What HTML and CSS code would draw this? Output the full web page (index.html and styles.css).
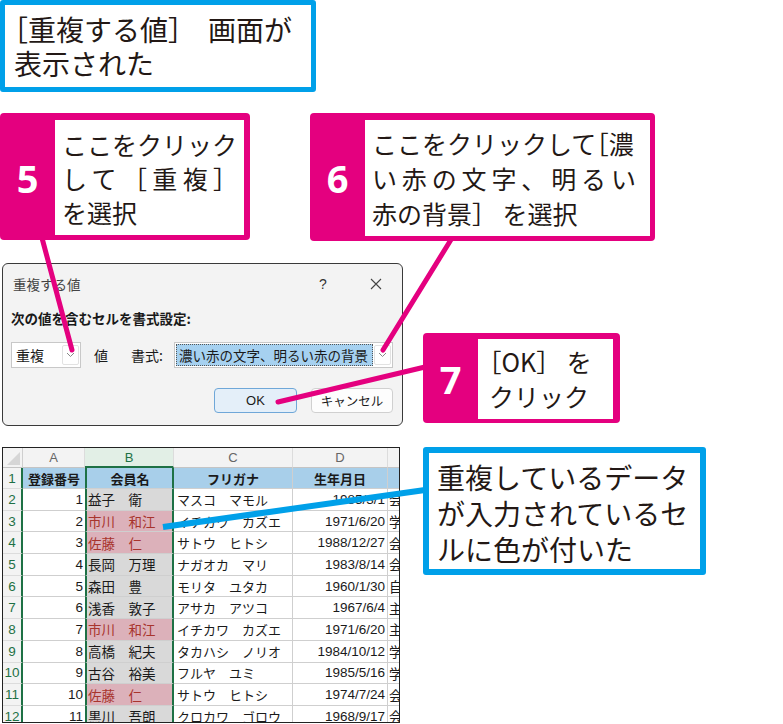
FILE: index.html
```html
<!DOCTYPE html>
<html lang="ja">
<head>
<meta charset="utf-8">
<link rel="stylesheet" href="styles.css">
</head>
<body>
<div class="stage">
  <div class="note note-top">
    <div><span class="half">［</span>重複する値<span class="gap">］</span>画面が</div>
    <div>表示された</div>
  </div>

  <div class="dialog">
    <div class="dlg-title">
      <span class="dlg-name">重複する値</span>
      <span class="tb q">?</span>
      <span class="tb x"><svg width="12" height="12" viewBox="0 0 12 12"><path d="M1 1 L11 11 M11 1 L1 11" stroke="#444" stroke-width="1.1" fill="none"/></svg></span>
    </div>
    <div class="dlg-label">次の値を含むセルを書式設定:</div>
    <div class="dlg-controls">
      <div class="select s1"><span class="sel-text">重複</span><span class="arrow"><svg width="9" height="6" viewBox="0 0 9 6"><path d="M1 1 L4.5 4.5 L8 1" stroke="#888" stroke-width="1" fill="none"/></svg></span></div>
      <span class="lbl v">値</span>
      <span class="lbl f">書式:</span>
      <div class="select s2"><span class="hl">濃い赤の文字、明るい赤の背景</span><span class="arrow"><svg width="9" height="6" viewBox="0 0 9 6"><path d="M1 1 L4.5 4.5 L8 1" stroke="#888" stroke-width="1" fill="none"/></svg></span></div>
    </div>
    <div class="dlg-buttons">
      <span class="btn ok">OK</span>
      <span class="btn cancel">キャンセル</span>
    </div>
  </div>

  <div class="sheet">
    <div class="c corner"><span class="tri"></span></div>
    <div class="c ch">A</div>
    <div class="c ch selc">B</div>
    <div class="c ch">C</div>
    <div class="c ch">D</div>
    <div class="c ch"></div>

    <div class="c rh">1</div>
    <div class="c a hd">登録番号</div>
    <div class="c b hd">会員名</div>
    <div class="c hd">フリガナ</div>
    <div class="c hd">生年月日</div>
    <div class="c hd e"></div>

    <div class="c rh">2</div><div class="c a num">1</div><div class="c b">益子　衛</div><div class="c kana">マスコ　マモル</div><div class="c num">1985/3/1</div><div class="c e">会</div>
    <div class="c rh">3</div><div class="c a num">2</div><div class="c b dup">市川　和江</div><div class="c kana">イチカワ　カズエ</div><div class="c num">1971/6/20</div><div class="c e">学</div>
    <div class="c rh">4</div><div class="c a num">3</div><div class="c b dup">佐藤　仁</div><div class="c kana">サトウ　ヒトシ</div><div class="c num">1988/12/27</div><div class="c e">会</div>
    <div class="c rh">5</div><div class="c a num">4</div><div class="c b">長岡　万理</div><div class="c kana">ナガオカ　マリ</div><div class="c num">1983/8/14</div><div class="c e">会</div>
    <div class="c rh">6</div><div class="c a num">5</div><div class="c b">森田　豊</div><div class="c kana">モリタ　ユタカ</div><div class="c num">1960/1/30</div><div class="c e">自</div>
    <div class="c rh">7</div><div class="c a num">6</div><div class="c b">浅香　敦子</div><div class="c kana">アサカ　アツコ</div><div class="c num">1967/6/4</div><div class="c e">主</div>
    <div class="c rh">8</div><div class="c a num">7</div><div class="c b dup">市川　和江</div><div class="c kana">イチカワ　カズエ</div><div class="c num">1971/6/20</div><div class="c e">主</div>
    <div class="c rh">9</div><div class="c a num">8</div><div class="c b">高橋　紀夫</div><div class="c kana">タカハシ　ノリオ</div><div class="c num">1984/10/12</div><div class="c e">学</div>
    <div class="c rh">10</div><div class="c a num">9</div><div class="c b">古谷　裕美</div><div class="c kana">フルヤ　ユミ</div><div class="c num">1985/5/16</div><div class="c e">学</div>
    <div class="c rh">11</div><div class="c a num">10</div><div class="c b dup">佐藤　仁</div><div class="c kana">サトウ　ヒトシ</div><div class="c num">1974/7/24</div><div class="c e">会</div>
    <div class="c rh">12</div><div class="c a num">11</div><div class="c b">黒川　吾朗</div><div class="c kana">クロカワ　ゴロウ</div><div class="c num">1968/9/17</div><div class="c e">会</div>
  </div>

  <svg class="leaders" width="783" height="724" viewBox="0 0 783 724">
    <line x1="42" y1="238" x2="72" y2="350" stroke="#e4007f" stroke-width="5" stroke-linecap="round"/>
    <line x1="452" y1="238" x2="383" y2="350" stroke="#e4007f" stroke-width="5" stroke-linecap="round"/>
    <line x1="425" y1="367" x2="278" y2="402" stroke="#e4007f" stroke-width="5" stroke-linecap="round"/>
    <line x1="425" y1="490" x2="163" y2="527" stroke="#00a0e9" stroke-width="6"/>
  </svg>

  <div class="callout c5">
    <div class="num-badge">5</div>
    <div class="body">
      <div class="ln">ここをクリック</div>
      <div class="ln just">して［重複］</div>
      <div class="ln">を選択</div>
    </div>
  </div>

  <div class="callout c6">
    <div class="num-badge">6</div>
    <div class="body">
      <div class="ln">ここをクリックして<span class="half">［</span>濃</div>
      <div class="ln just">い赤の文字、明るい</div>
      <div class="ln">赤の背景］ を選択</div>
    </div>
  </div>

  <div class="callout c7">
    <div class="num-badge">7</div>
    <div class="body">
      <div class="ln"><span class="half">［</span>OK］ を</div>
      <div class="ln">クリック</div>
    </div>
  </div>

  <div class="note note-right">
    <div>重複しているデータ</div>
    <div>が入力されているセ</div>
    <div>ルに色が付いた</div>
  </div>
</div>
</body>
</html>
```

FILE: styles.css
```css
body {
  margin: 0;
  background: #fff;
  font-family: "Noto Sans CJK JP", sans-serif;
  color: #231815;
}

.stage {
  position: relative;
  width: 783px;
  height: 724px;
  overflow: hidden;
}

.half { font-feature-settings: "halt"; }
.gap { margin-right: 12px; }

/* blue notes */
.note {
  position: absolute;
  box-sizing: border-box;
  background: #fff;
  border-style: solid;
  border-color: #00a0e9;
  border-radius: 3px;
  font-size: 28px;
  line-height: 34px;
  white-space: nowrap;
}

.note-top {
  left: 0;
  top: 0;
  width: 316px;
  height: 92px;
  border-width: 5px;
  padding: 7px 0 0 9px;
}

.note-right {
  left: 423px;
  top: 447px;
  width: 283px;
  height: 128px;
  border-width: 6px;
  padding: 6px 0 0 8px;
  line-height: 36px;
}

/* pink callouts */
.callout {
  position: absolute;
  box-sizing: border-box;
  background: #e4007f;
  border-radius: 4px;
  display: flex;
  padding: 7px 6px 5px 0;
}

.c5 { left: 0; top: 113px; width: 250px; height: 127px; }
.c6 { left: 310px; top: 113px; width: 345px; height: 128px; padding-right: 5px; }
.c7 { left: 423px; top: 333px; width: 197px; height: 90px; padding: 6px 7px 4px 0; }

.num-badge {
  width: 55px;
  flex: none;
  display: flex;
  align-items: center;
  justify-content: center;
  color: #fff;
  font-family: "Open Sans", "Liberation Sans", sans-serif;
  font-weight: 700;
  font-size: 38px;
}

.body {
  flex: 1;
  background: #fff;
  display: flex;
  flex-direction: column;
  justify-content: center;
  padding: 0 6px 0 7px;
  font-size: 25px;
  line-height: 34px;
  min-width: 0;
}

.c6 .body { line-height: 35px; }
.c7 .body { line-height: 35px; padding-left: 11px; }

.ln { white-space: nowrap; }
.just { text-align: justify; text-align-last: justify; }
.c6 .just { padding-right: 8px; }

/* leader lines */
.leaders {
  position: absolute;
  left: 0;
  top: 0;
  pointer-events: none;
}

/* dialog */
.dialog {
  position: absolute;
  left: 2px;
  top: 263px;
  width: 401px;
  height: 163px;
  box-sizing: border-box;
  border: 1px solid #3a3a3a;
  border-radius: 6px;
  background: #f3f3f3;
  padding: 0 8px 0 7px;
  color: #1a1a1a;
  display: flex;
  flex-direction: column;
}

.dlg-title {
  height: 40px;
  display: flex;
  align-items: center;
  font-size: 13.5px;
  margin-right: -8px;
}

.dlg-name { color: #444; flex: 1; padding-left: 3px; }

.tb {
  width: 20px;
  text-align: center;
  display: flex;
  justify-content: center;
  align-items: center;
}
.tb.q { margin-right: 33px; font-family: "Liberation Sans", sans-serif; font-size: 14px; color: #333; }
.tb.x { margin-right: 16px; }

.dlg-label {
  height: 28px;
  display: flex;
  align-items: center;
  font-size: 13.5px;
  font-weight: 700;
  padding-left: 1px;
  white-space: nowrap;
}

.dlg-controls {
  margin-top: 10px;
  height: 26px;
  display: flex;
  align-items: center;
  font-size: 14px;
  white-space: nowrap;
}

.select {
  height: 26px;
  box-sizing: border-box;
  background: #fff;
  border: 1px solid #c8c8c8;
  display: flex;
  align-items: center;
  justify-content: space-between;
  padding: 0 1px 0 3px;
  flex: none;
}

.s1 { width: 70px; margin-left: 1px; }
.s2 { width: 219px; padding-left: 1px; }

.sel-text { padding-left: 1px; }

.arrow {
  width: 17px;
  height: 20px;
  box-sizing: border-box;
  border: 1px solid #e2e2e2;
  border-radius: 2px;
  background: #fff;
  display: flex;
  align-items: center;
  justify-content: center;
  flex: none;
}

.lbl { flex: none; }
.lbl.v { margin-left: 13px; }
.lbl.f { margin-left: 23px; margin-right: 11px; }

.hl {
  flex: 1;
  height: 22px;
  box-sizing: border-box;
  background: #a6d1f0;
  border: 1px dotted #555;
  font-size: 13.5px;
  line-height: 20px;
  padding-left: 2px;
  margin-right: 1px;
  white-space: nowrap;
  overflow: hidden;
}

.dlg-buttons {
  margin-top: 20px;
  height: 25px;
  display: flex;
  justify-content: flex-end;
  gap: 14px;
  padding-right: 1px;
}

.btn {
  width: 83px;
  height: 25px;
  box-sizing: border-box;
  border: 1px solid #d0d0d0;
  border-radius: 4px;
  background: #fdfdfd;
  display: flex;
  align-items: center;
  justify-content: center;
  font-size: 13px;
}

.btn.ok {
  background: #e4eff9;
  border-color: #6fa7d8;
  font-family: "Liberation Sans", sans-serif;
}

.btn.cancel { width: 82px; font-size: 12.5px; }

/* spreadsheet */
.sheet {
  position: absolute;
  left: 2px;
  top: 447px;
  width: 398px;
  height: 276px;
  box-sizing: border-box;
  border: 1px solid #222;
  background: #fff;
  overflow: hidden;
  display: grid;
  grid-template-columns: 20px 62px 89px 119px 95px 40px;
  grid-template-rows: 20px 21px repeat(11, 21.7px);
}

.c {
  box-sizing: border-box;
  border-right: 1px solid #cfcfcf;
  border-bottom: 1px solid #cfcfcf;
  display: flex;
  align-items: center;
  white-space: nowrap;
  overflow: hidden;
  font-size: 13.5px;
  color: #1a1a1a;
}

.corner {
  background: #f3f3f3;
  position: relative;
  border-bottom-color: #c4c4c4;
}

.tri {
  position: absolute;
  right: 2px;
  bottom: 2px;
  width: 0;
  height: 0;
  border-left: 13px solid transparent;
  border-bottom: 13px solid #d6d6d6;
}

.ch {
  background: #f3f3f3;
  justify-content: center;
  font-family: "Liberation Sans", sans-serif;
  font-size: 13px;
  color: #666;
  border-bottom-color: #c4c4c4;
  border-right-color: #dcdcdc;
}

.ch.selc {
  background: #e2efe6;
  color: #1e7145;
  border-bottom: 2px solid #1e7145;
}

.rh {
  background: #f3f3f3;
  justify-content: center;
  font-family: "Liberation Sans", sans-serif;
  font-size: 13.5px;
  color: #1e7145;
  border-right: 2px solid #1e7145;
  border-bottom-color: #dcdcdc;
}

.a { border-right: none; }

.b {
  background: #d9d9d9;
  border-left: 2px solid #1e7145;
  border-right: 2px solid #1e7145;
  padding-left: 1px;
}

.hd {
  background: #a8cfea;
  font-weight: 700;
  font-size: 13px;
  justify-content: center;
}

.b.hd { background: #a8cfea; }

.dup {
  background: #dcb1ba;
  color: #a8342d;
}

.num {
  justify-content: flex-end;
  font-family: "Liberation Sans", sans-serif;
  font-size: 13.5px;
  padding-right: 2px;
}

.kana {
  font-size: 13px;
  padding-left: 3px;
}

.e { padding-left: 1px; border-right: none; }
```
